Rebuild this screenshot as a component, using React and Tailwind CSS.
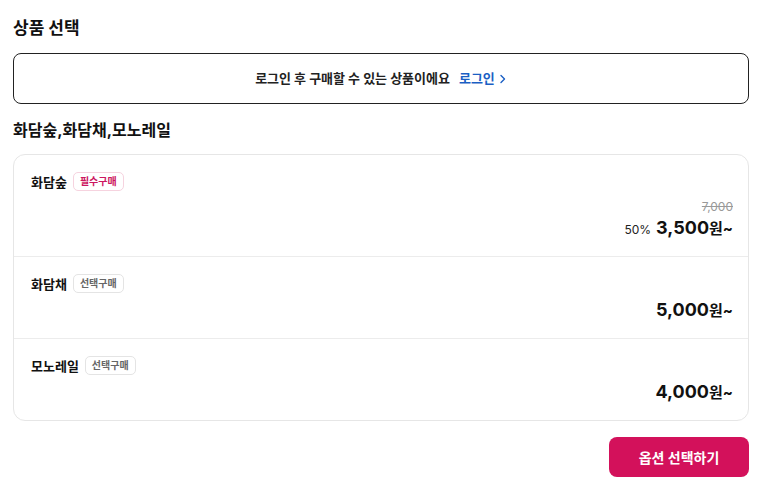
import React from 'react';

const items = [
  { name: '화담숲', required: true, original: '7,000', discount: '50%', price: '3,500' },
  { name: '화담채', required: false, price: '5,000' },
  { name: '모노레일', required: false, price: '4,000' },
];

const ProductRow = ({ item, last }) => {
  return (
    <div className={`pl-[17px] pr-[15px] pt-[17px] pb-[14px] ${last ? '' : 'border-b border-[#ececec]'}`}>
      <div className="flex items-center gap-[6px]">
        <span className="text-[13px] font-bold text-[#111] leading-[18px]">{item.name}</span>
        {item.required ? (
          <span className="h-[19px] px-[6px] flex items-center rounded-[5px] border border-[#f6d3df] text-[10px] font-bold text-[#cc1660]">
            필수구매
          </span>
        ) : (
          <span className="h-[19px] px-[6px] flex items-center rounded-[5px] border border-[#e4e4e4] text-[10px] font-bold text-[#666]">
            선택구매
          </span>
        )}
      </div>
      <div className={`flex flex-col items-end ${item.original ? 'mt-[8px]' : 'mt-[4px]'}`}>
        {item.original && (
          <span className="text-[12px] text-[#999] line-through leading-[16px]">{item.original}</span>
        )}
        <div className="flex items-baseline gap-[5px]">
          {item.discount && <span className="text-[12px] text-[#222]">{item.discount}</span>}
          <span className="text-[18px] font-bold text-[#111] leading-[26px]">
            {item.price}
            <span className="text-[15px]">원~</span>
          </span>
        </div>
      </div>
    </div>
  );
};

const App = () => {
  return (
    <div
      className="w-[760px] h-[490px] bg-white pl-[13px] pr-[11px] pt-[16px]"
      style={{ fontFamily: "Inter, 'Noto Sans CJK KR', sans-serif" }}
    >
      <h1 className="text-[17px] font-bold text-[#111] leading-[24px]">상품 선택</h1>

      <div className="mt-[13px] h-[51px] border border-[#222] rounded-[8px] flex items-center justify-center gap-[9px]">
        <span className="text-[13px] font-bold text-[#222]">로그인 후 구매할 수 있는 상품이에요</span>
        <span className="flex items-center gap-[4px] text-[13px] font-bold text-[#1b5fc4]">
          로그인
          <svg width="8" height="10" viewBox="0 0 8 10" fill="none">
            <path d="M2 1.5 L5.5 5 L2 8.5" stroke="#1b5fc4" strokeWidth="1.4" strokeLinecap="round" strokeLinejoin="round" />
          </svg>
        </span>
      </div>

      <h2 className="mt-[14px] text-[16px] font-bold text-[#111] leading-[24px]">화담숲,화담채,모노레일</h2>

      <div className="mt-[12px] border border-[#e6e6e6] rounded-[12px]">
        {items.map((item, i) => (
          <ProductRow key={item.name} item={item} last={i === items.length - 1} />
        ))}
      </div>

      <div className="flex justify-end mt-[16px]">
        <button className="w-[140px] h-[40px] rounded-[8px] bg-[#d3115b] text-white text-[14px] font-bold">
          옵션 선택하기
        </button>
      </div>
    </div>
  );
};

export default App;
